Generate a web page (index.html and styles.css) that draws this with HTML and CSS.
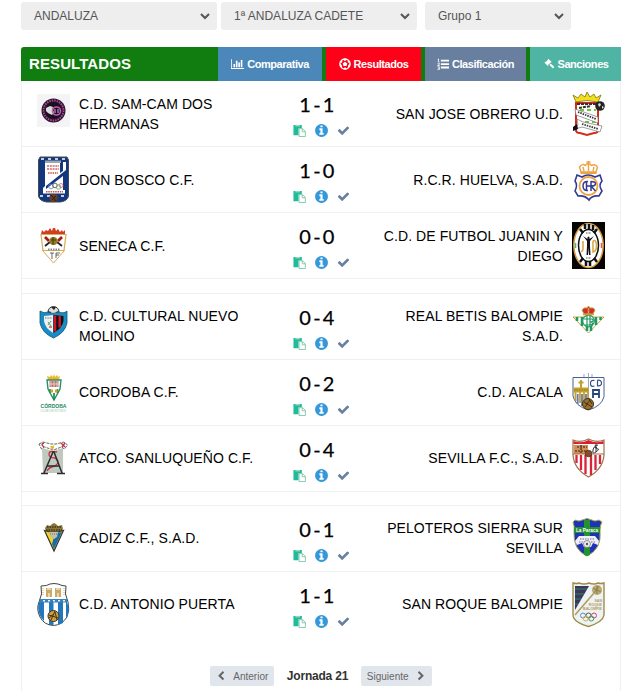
FILE: index.html
```
<!DOCTYPE html>
<html lang="es">
<head>
    <meta charset="UTF-8">
    <meta name="viewport" content="width=device-width, initial-scale=1.0">
    <title>Resultados - Jornada 21</title>
    <link rel="stylesheet" href="styles.css">
</head>
<body>
    <svg class="sprite" aria-hidden="true">
        <symbol id="i-chart" viewBox="0 0 2048 1792"><path d="M640 896v512h-256v-512h256zm384-512v1024h-256v-1024h256zm1024 1152v128h-2048v-1536h128v1408h1920zm-640-896v768h-256v-768h256zm384-384v1152h-256v-1152h256z"/></symbol>
        <symbol id="i-ball" viewBox="0 0 14 14"><circle cx="7" cy="7" r="6" fill="none" stroke="currentColor" stroke-width="1.600"/><path d="M7 4.300l2.700 2-1 3.100H5.300l-1-3.100zM3.600 1.600L7 3.500l3.400-1.900L7 .5zM1 6.500l2.200 1.700.5 3.500L1.500 10zM13 6.500l-2.200 1.700-.5 3.500 2.200-1.700zM1.500 4.800l2.100-2.900.3 2.800-1.800 1.400zM12.500 4.800l-2.100-2.900-.3 2.800 1.800 1.400zM4.500 12.900L7 10.800l2.500 2.100-2.500.6z"/></symbol>
        <symbol id="i-list" viewBox="0 0 14 14"><path d="M4.500 2h9.500v2.200H4.500zM4.500 6h9.500v2.200H4.500zM4.500 10h9.500v2.200H4.500zM1.300 1h1v3.300h1v.7H.5v-.7h.9V2H.6zM.6 5.700h2.500v2L1.500 8.600h1.700v.7H.5v-1l1.700-1.100v-.8H.6zM.6 10h2.600v3.600H.5v-.8h1.800v-.6H1v-.8h1.300v-.6H.6z"/></symbol>
        <symbol id="i-gavel" viewBox="0 0 14 14"><path d="M6.200.8l3.900 3.900-1 1-.5-.4-1 1 .9.900.8-.6 4 4-1.700 1.700-4-4 .5-.8-.9-.9-1.100 1.100.5.500-1 1L1.700 5.300l1-1 .5.400 2.700-2.700-.6-.3z"/></symbol>
        <symbol id="i-paste" viewBox="0 0 14 14"><path d="M.5 1.200h9v3.300H6v7.700H.5z"/><path fill="#9fd8b4" d="M2.500 1h5v1.600h-5z"/><path fill="#fff" stroke="#7dc9a4" d="M6.500 5h3.800l3 3v5.500H6.500z"/><path fill="none" stroke="#7dc9a4" d="M10 5v3.400h3.400"/></symbol>
        <symbol id="i-info" viewBox="0 0 1792 1792"><path d="M1152 1376v-160q0-14-9-23t-23-9h-96v-512q0-14-9-23t-23-9h-320q-14 0-23 9t-9 23v160q0 14 9 23t23 9h96v320h-96q-14 0-23 9t-9 23v160q0 14 9 23t23 9h448q14 0 23-9t9-23zm-128-896v-160q0-14-9-23t-23-9h-192q-14 0-23 9t-9 23v160q0 14 9 23t23 9h192q14 0 23-9t9-23zm640 416q0 209-103 385.500t-279.500 279.500-385.500 103-385.500-103-279.500-279.500-103-385.500 103-385.500 279.500-279.500 385.500-103 385.500 103 279.500 279.500 103 385.500z"/></symbol>
        <symbol id="i-check" viewBox="0 0 1792 1792"><path d="M1671 566q0 40-28 68l-724 724-136 136q-28 28-68 28t-68-28l-136-136-362-362q-28-28-28-68t28-68l136-136q28-28 68-28t68 28l294 295 656-657q28-28 68-28t68 28l136 136q28 28 28 68z"/></symbol>
        <symbol id="i-left" viewBox="0 0 1792 1792"><path d="M1427 301l-531 531 531 531q19 19 19 45t-19 45l-166 166q-19 19-45 19t-45-19l-742-742q-19-19-19-45t19-45l742-742q19-19 45-19t45 19l166 166q19 19 19 45t-19 45z"/></symbol>
        <symbol id="i-right" viewBox="0 0 1792 1792"><path d="M1363 877l-742 742q-19 19-45 19t-45-19l-166-166q-19-19-19-45t19-45l531-531-531-531q-19-19-19-45t19-45l166-166q19-19 45-19t45 19l742 742q19 19 19 45t-19 45z"/></symbol>
    </svg>

    <form class="filters">
        <select class="filter"><option>ANDALUZA</option></select>
        <select class="filter"><option>1ª ANDALUZA CADETE</option></select>
        <select class="filter filter-group"><option>Grupo 1</option></select>
    </form>

    <div class="card">
        <div class="card-header">
            <h1>RESULTADOS</h1>
            <a class="tab tab-comparativa"><svg class="wide"><use href="#i-chart"/></svg>Comparativa</a>
            <a class="tab tab-resultados"><svg><use href="#i-ball"/></svg>Resultados</a>
            <a class="tab tab-clasificacion"><svg><use href="#i-list"/></svg>Clasificación</a>
            <a class="tab tab-sanciones"><svg><use href="#i-gavel"/></svg>Sanciones</a>
        </div>

        <div class="match">
            <svg class="crest" viewBox="0 0 33 47">
                <path fill="#f4f4f6" d="M0 4h33v33H0z"/>
                <circle cx="16.500" cy="20.500" r="12" fill="#28152a"/>
                <circle cx="16.500" cy="20.500" r="10" fill="none" stroke="#b04a9a" stroke-width="1.800" stroke-dasharray="1.500 1"/>
                <circle cx="16.500" cy="20.500" r="8" fill="#17121c"/>
                <path fill="#ddd" d="M9 18l4-2 3 1-1 3 2 2-2 3-4-2-2-2z"/>
                <circle cx="19.500" cy="21" r="4" fill="none" stroke="#c35cc0" stroke-width="1.600"/>
                <path stroke="#e8a4df" d="M18 19v4M21 19v4"/>
            </svg>
            <div class="team">C.D. SAM-CAM DOS HERMANAS</div>
            <div class="result">
                <div class="score">1-1</div>
                <div class="actions"><svg class="paste"><use href="#i-paste"/></svg><svg class="info"><use href="#i-info"/></svg><svg class="check"><use href="#i-check"/></svg></div>
            </div>
            <div class="team away">SAN JOSE OBRERO U.D.</div>
            <svg class="crest" viewBox="0 0 33 47">
                <path fill="#fff" stroke="#d8291c" stroke-width="2" d="M4 13h22v27q0 3-4 3l-7 2-7-2q-4 0-4-3z"/>
                <path fill="#f2de1c" stroke="#7d7414" stroke-width=".8" d="M1 5l5 3 3-4 4 3 2-5 3 5 4-3 2 4 5-3-3 7q-11-3-22 0z"/>
                <path stroke="#333" stroke-width="2" stroke-dasharray="3 1" d="M5 14h19M7 18l12-2"/>
                <path stroke="#6bc832" stroke-width="2" stroke-dasharray="4 3" d="M8 20h16M6 32h18"/>
                <circle cx="28" cy="16" r="4.800" fill="#222"/>
                <path fill="#ddd" d="M26 14l2-1 1 2-2 2zM30 16l2 1-2 2z"/>
                <path fill="#fff" stroke="#777" stroke-width=".7" d="M3 19l23 8v6L4 25zM5 29l6 3 19 4-2 6-18-5-7 2 3-4z"/>
                <path stroke="#333" stroke-width="1.800" stroke-dasharray="1.500 1" d="M6 22l18 7M10 34l16 5"/>
                <path fill="#111" d="M1 37l4-3 1 5-5 2z"/>
            </svg>
        </div>
        <div class="match">
            <svg class="crest" viewBox="0 0 33 47">
                <path fill="#12377c" stroke="#434c55" d="M3 1h27l1.500 3v36q-1 5-8 6h-14q-7-1-8-6V4z"/>
                <path fill="#fff" d="M8 7h15v10l3-2V6h3v8L9 30v5H6V32l2-2zM9 33L26 20v14H9z"/>
                <path stroke="#fff" stroke-width="1.500" stroke-dasharray="3 4" d="M4 3h25M3 40h28"/>
                <path fill="#99a7b2" d="M8 4.500h16v2.500H8z"/>
                <path stroke="#dc8a87" stroke-width="2" stroke-dasharray="2 .8" d="M10 10h12M10 13h12"/>
                <path stroke="#c7503b" stroke-width="1.300" stroke-dasharray="1.500 .8" d="M11 17h10"/>
                <path fill="#fff" d="M6 34h22v3.500H6z"/>
                <path stroke="#c7503b" stroke-width="1.600" stroke-dasharray="1.500 .8" d="M9 35.700h17"/>
                <g fill="none" stroke-width=".8"><circle cx="14" cy="30.500" r="2.300" stroke="#658cd0"/><circle cx="18" cy="29.500" r="2.300" stroke="#444"/><circle cx="21.500" cy="31" r="2.300" stroke="#5cac68"/><circle cx="24" cy="29.500" r="2" stroke="#db6666"/></g>
                <circle cx="16.500" cy="42" r="4.200" fill="#653c24"/>
                <path stroke="#301b16" d="M14 39l5 6M19 40l-4 4"/>
            </svg>
            <div class="team">DON BOSCO C.F.</div>
            <div class="result">
                <div class="score">1-0</div>
                <div class="actions"><svg class="paste"><use href="#i-paste"/></svg><svg class="info"><use href="#i-info"/></svg><svg class="check"><use href="#i-check"/></svg></div>
            </div>
            <div class="team away">R.C.R. HUELVA, S.A.D.</div>
            <svg class="crest" viewBox="0 0 33 47">
                <g fill="none" stroke="#eda340" stroke-width="1.400"><path d="M9 16L7.500 11q3-4 6-1.500 2.500-4 6 0 4-2 6 1.500L24 16zM12 15l-1-4M16.500 15V8M21 15l1-4M16.500 5v3M14.500 6h4"/><path stroke-width="2" d="M8.500 17h16"/><circle cx="16.500" cy="30" r="9" stroke-width="1.800"/></g>
                <g fill="none" stroke="#343b92"><path stroke-width="1.600" d="M5 19l5 2q6-4 13 0l5-2 2 6q-4 4 0 10l-3 5q-7-1-10 4-4-5-11-4l-3-5q3-6 0-10z"/><path stroke-width="1.500" d="M16 25.500q-5-.5-5 4.500t5 4.500M14.500 25v10M14.500 30h5M19 25v10M19 25.500q4.500 0 4.500 2.300T19 30l4.500 5"/></g>
            </svg>
        </div>
        <div class="match">
            <svg class="crest" viewBox="0 0 33 47">
                <path fill="#d33d20" d="M4 12l1-4 2 2 2-2 2 1 2-3 2 3 1-3h2l1 3 2-2 2 3 2-2 1 2 2-2v4z"/>
                <path fill="#fff" stroke="#d6ac57" stroke-width="1.200" d="M4 12.500h25l-2 16H6z"/>
                <path fill="none" stroke="#d6ac57" d="M5.500 28.500h22L16.500 41z"/>
                <path stroke="#222" stroke-width="1.800" d="M8 24l5-4M25 24l-5-4"/>
                <path stroke="#a51c17" stroke-width="2.800" d="M8 15l4 4M25 15l-4 4"/>
                <circle cx="16.500" cy="19" r="4" fill="#937b20"/><path stroke="#433b17" d="M14 18h5M16 15v8"/>
                <path stroke="#888" stroke-width="1.800" stroke-dasharray="1.500 1" d="M11 27.500h12"/>
                <path fill="none" stroke="#555" stroke-width=".9" d="M13 31h4M15 31v6M19 36v-5h4M19 33h3"/>
            </svg>
            <div class="team">SENECA C.F.</div>
            <div class="result">
                <div class="score">0-0</div>
                <div class="actions"><svg class="paste"><use href="#i-paste"/></svg><svg class="info"><use href="#i-info"/></svg><svg class="check"><use href="#i-check"/></svg></div>
            </div>
            <div class="team away">C.D. DE FUTBOL JUANIN Y DIEGO</div>
            <svg class="crest" viewBox="0 0 33 47">
                <path fill="#050403" d="M0 0h33v47H0z"/>
                <ellipse cx="16.500" cy="23.500" rx="14.700" ry="22" fill="#fff" stroke="#d5993e" stroke-width="1.500"/>
                <ellipse cx="16.500" cy="23.500" rx="10" ry="16" fill="#fff" stroke="#111" stroke-width="1.500"/>
                <path stroke="#111" stroke-width="2.500" d="M13 2v5M17 2v5M21 3v5M14 39v5M18 39v5M8 7l3 4M25 7l-3 4M8 40l3-4M25 40l-3-4"/>
                <path stroke="#56b184" stroke-width="1.500" d="M3.500 21v5"/><path stroke="#d95b61" stroke-width="1.500" d="M29.500 21v5"/>
                <path fill="none" stroke="#d6aa49" stroke-width="1.600" d="M11 19v7q0 4-2 3M21 19v11q4-1 3.500-7t-3.500-4"/>
                <path fill="#111" d="M11 14l4.500 3q-.5-2.500 1-2.500t1 2.500l4.500-3-4 5v5l.5 9h-1.500l-.5-7-.5 7H14.500l.5-9v-5z"/>
                <path stroke="#555" stroke-width="1.200" stroke-dasharray="1 .5" d="M14 11h5M14 36h5"/>
            </svg>
        </div>

        <div class="separator"></div>

        <div class="match">
            <svg class="crest" viewBox="0 0 33 47">
                <circle cx="16.500" cy="9" r="5.500" fill="#ddd" stroke="#333"/><path fill="#222" d="M14 4h5l-2 3zM11 8l3 1-1 3-2-1zM22 8l-3 1 1 3z"/>
                <path fill="#188cc5" stroke="#17546f" stroke-width=".8" d="M3 8q4 3 8 1 5 3 10 0 6 2 9-1v12q-2 10-13.500 15Q5 30 3 20z"/>
                <path fill="#eee" d="M7 13l9-1v18q-8-5-9-12z"/>
                <path fill="#131016" d="M16.500 12l10 1v5q-1 7-10 12z"/>
                <path stroke="#cf1624" stroke-width="2.400" d="M18 12.500v16M22.700 12.500v12"/>
                <path stroke="#777" stroke-dasharray="1 .6" d="M8 15h7"/><path stroke="#54a56c" d="M11 19l3 4M14 18l-3 4"/><path stroke="#c45d4c" stroke-width="1.500" d="M12 24h3"/>
            </svg>
            <div class="team">C.D. CULTURAL NUEVO MOLINO</div>
            <div class="result">
                <div class="score">0-4</div>
                <div class="actions"><svg class="paste"><use href="#i-paste"/></svg><svg class="info"><use href="#i-info"/></svg><svg class="check"><use href="#i-check"/></svg></div>
            </div>
            <div class="team away">REAL BETIS BALOMPIE S.A.D.</div>
            <svg class="crest" viewBox="0 0 33 47">
                <path fill="#fff" stroke="#c9a34a" d="M1 14h31L16.500 30z"/>
                <path stroke="#1a9d60" stroke-width="2.500" d="M5 14v4M10 14v9M24 14v8M28.500 14v3M15 22v6M19 22v6"/>
                <circle cx="16.500" cy="18" r="5.800" fill="#fff" stroke="#23955e" stroke-width="1.200"/>
                <path fill="none" stroke="#23955e" stroke-width="1.200" d="M15 13v10M18 13v10M12 16h8q3 2-1 3 4 2-1 3h-5"/>
                <path fill="#d82930" stroke="#c4a23d" d="M12 11l-2-4q2-3 5-2l1.500-2L18 5q4-1 5 2l-2 4z"/>
                <path stroke="#c4a23d" stroke-width="1.600" d="M11 11.500h11M16.500 5v6"/>
            </svg>
        </div>
        <div class="match">
            <svg class="crest" viewBox="0 0 33 47">
                <path fill="#efb52a" d="M10 7l3 1 1-2 2 2 1-3 1 3 2-2 1 2 2-1-1 4H11z"/>
                <path fill="#fff" stroke="#299069" stroke-width="1.400" d="M10 11h14l-1 9-6 11-6-11z"/>
                <path fill="#bd7369" d="M12.500 12h9v6h-9z"/><path stroke="#eee" stroke-width=".7" d="M14 12v6M17 12v6M20 12v6M12 15h10"/>
                <path stroke="#178c5c" stroke-width="1.700" d="M13 20v4M17 24v7M20.500 20v4"/>
                <path stroke="#df9e27" stroke-width="3" stroke-dasharray="2.500 2" d="M13.500 22h7"/>
                <text class="crest-name" x="16.500" y="39" textLength="26" lengthAdjust="spacingAndGlyphs">CÓRDOBA</text>
                <text class="crest-sub" x="16.500" y="43" textLength="26" lengthAdjust="spacingAndGlyphs">CLUB DE FÚTBOL</text>
            </svg>
            <div class="team">CORDOBA C.F.</div>
            <div class="result">
                <div class="score">0-2</div>
                <div class="actions"><svg class="paste"><use href="#i-paste"/></svg><svg class="info"><use href="#i-info"/></svg><svg class="check"><use href="#i-check"/></svg></div>
            </div>
            <div class="team away">C.D. ALCALA</div>
            <svg class="crest" viewBox="0 0 33 47">
                <path fill="#fff" stroke="#486093" d="M1 8.500h31v19Q30 37 16.500 41 3 37 1 27z"/>
                <path stroke="#8791ad" stroke-width=".8" d="M12 5v3M16.500 4v36M20 5v3"/>
                <path stroke="#c0a02e" stroke-width="2" d="M9 11v9M6.500 13.500h5"/>
                <path fill="#c5a32b" d="M1.500 18.500h15v5h-15z"/>
                <path stroke="#c5a32b" stroke-width="1.800" d="M3.500 23v9M8 23v11M12 23v9M16 23v9"/><path stroke="#6678b8" stroke-width="1.800" d="M5.700 25v10M10 25v12M14 25v6"/>
                <path stroke="#8b7228" stroke-dasharray="1.500 1" d="M2 21h14"/>
                <circle cx="16" cy="35" r="5.500" fill="#9c722a" stroke="#3e3020"/><path fill="none" stroke="#3e3020" d="M12 33l8 5M13 38l5-7M17 30l3 5"/>
                <path fill="none" stroke="#365083" stroke-width="1.200" d="M22.500 11.500q-4-1-4 3t4 2.500M25.500 11.200v5.600q4 .5 4-2.800t-4-2.800"/><path fill="none" stroke="#244378" stroke-width="1.800" d="M21 29v-8h6v8M21 25h6"/>
            </svg>
        </div>
        <div class="match">
            <svg class="crest" viewBox="0 0 33 47">
                <path fill="#bfc9bd" d="M5 13l11 3 10-3v25H6z"/>
                <path fill="#fff" stroke="#555" stroke-width=".9" stroke-dasharray="3 1" d="M2 9l4-2 8 2h5l8-2 3.500 3-3 4-3-2-8 3-9-3-3 2z"/>
                <path fill="none" stroke="#c92d41" stroke-width="1.300" d="M7 8q-4 1 0 4M24 8l4 4M28 8l-3 4M20 17q-8-2-8 2t6 4q6 4 0 8-6 1-8 5"/>
                <path fill="#e0bb32" d="M13 11h3l1-1v3l-2 2z"/>
                <path fill="none" stroke="#292d32" stroke-width="1.500" d="M7 38l9-21h1L25 38M10 31h13M4 38.500h7M20 38.500h8"/>
            </svg>
            <div class="team">ATCO. SANLUQUEÑO C.F.</div>
            <div class="result">
                <div class="score">0-4</div>
                <div class="actions"><svg class="paste"><use href="#i-paste"/></svg><svg class="info"><use href="#i-info"/></svg><svg class="check"><use href="#i-check"/></svg></div>
            </div>
            <div class="team away">SEVILLA F.C., S.A.D.</div>
            <svg class="crest" viewBox="0 0 33 47">
                <path fill="#fff" stroke="#9f7045" stroke-width="1.200" d="M1 5q8 3 15.500-1Q24 8 32 5v15q-1 14-15.500 22Q2 34 1 20z"/>
                <path fill="#d91e36" d="M1.500 6q8 3 15-1 7 4 15 1v3h-30z"/>
                <path fill="#cf9358" d="M2 10h14v9H2z"/><path stroke="#713d2c" stroke-width="1.500" stroke-dasharray="2 1" d="M5 12h10M3 16h12M9 10v9"/>
                <path fill="none" stroke="#333" stroke-width="1" d="M26 10q-4 0-3 2t3 2-2 3-3-2 4-2M24 9v8"/>
                <path stroke="#da2439" stroke-width="2.300" d="M4.500 20v8M9 20v15M13.500 20v19M19 20v20M23.500 20v15M28 20v9"/>
                <path stroke="#9f7045" d="M1 19h31"/><circle cx="16.500" cy="18.500" r="3.300" fill="#845029" stroke="#45291c" stroke-width=".7"/>
            </svg>
        </div>

        <div class="separator short"></div>

        <div class="match">
            <svg class="crest" viewBox="0 0 33 47">
                <path fill="#8c7734" d="M9 17l-1-4 2-3 3 1 2-2 2-1 2 1 2 2 4-1 1 4-2 3z"/>
                <path stroke="#3d3929" stroke-width="1.400" stroke-dasharray="1.500 1" d="M10 12h15M9 15h16"/>
                <path fill="#f3d41c" stroke="#333" stroke-width="1.200" d="M7.500 15.500l5 1.500h8l6-1.500L17 36z"/>
                <path fill="#176bb1" d="M18 18l7-1-8 17-2-5z"/>
                <path fill="#c7c1a1" d="M12 17h9l-1 5-3 2-4-2z"/><path stroke="#777" stroke-dasharray="1 1" d="M13 19h7"/>
            </svg>
            <div class="team">CADIZ C.F., S.A.D.</div>
            <div class="result">
                <div class="score">0-1</div>
                <div class="actions"><svg class="paste"><use href="#i-paste"/></svg><svg class="info"><use href="#i-info"/></svg><svg class="check"><use href="#i-check"/></svg></div>
            </div>
            <div class="team away">PELOTEROS SIERRA SUR SEVILLA</div>
            <svg class="crest" viewBox="0 0 33 47">
                <path fill="#2032b5" stroke="#a3aa4c" d="M1 7l2-2 4 1 8-2.500L23 6l4-1 3 2q-2 3-2 9 2 18-13 25Q1 35 2 17 3 12 1 7z"/>
                <path fill="#239330" d="M12 5h6v35l-3 1-3-1z"/><path fill="#239330" d="M2 12h26v6H2z"/>
                <text class="crest-label" x="15" y="17" textLength="22" lengthAdjust="spacingAndGlyphs">La Paraca</text>
                <path fill="#eef" d="M7 21h16l4 5-1 4-5-2-2 4h-7l-2-4-5 2-2-4z"/>
                <path stroke="#555" stroke-width=".8" stroke-dasharray="1.500 1" d="M8 24h14M7 27h4M19 27h4"/>
                <circle cx="15" cy="29" r="3.500" fill="#eee" stroke="#777" stroke-width=".8"/><circle cx="15" cy="29" r="1.200" fill="#555"/>
            </svg>
        </div>
        <div class="match last">
            <svg class="crest" viewBox="0 0 33 47">
                <path fill="#fff" stroke="#444" d="M4 5q6 0 9-2 4-1 8 0 4 2 8 2-2 8 2 16 2 8-1 15-5 8-13.500 8.500Q7 44 3 36-1 28 2 21 6 13 4 5z"/>
                <path fill="#2377bd" d="M2 21h5v19q-8-8-5-19zM12 21h4.500v23H12zM21 21h5v21l-5 2zM30 21q4 10-1 16V21z"/>
                <path fill="#3883b9" d="M3 18h27v3.500H2z"/><path stroke="#eee" stroke-width="1.400" stroke-dasharray="2 3" d="M6 19.700h22"/>
                <path fill="#cbab64" d="M9 7h6v9H9zM18 7h6v9h-6z"/><path stroke="#fff" d="M11 6v3M13 6v3M20 6v3M22 6v3M12 12v4M21 12v4"/>
                <path stroke="#d5be83" stroke-width="1.300" stroke-dasharray="1 1" d="M6 7v8M27 7v8"/>
                <circle cx="16.500" cy="35" r="5.500" fill="#d1a136" stroke="#3d3423"/><path fill="none" stroke="#3d3423" d="M12 34l9 3M14 39l4-9M18 31l2 8M12 37l5-4"/>
            </svg>
            <div class="team">C.D. ANTONIO PUERTA</div>
            <div class="result">
                <div class="score">1-1</div>
                <div class="actions"><svg class="paste"><use href="#i-paste"/></svg><svg class="info"><use href="#i-info"/></svg><svg class="check"><use href="#i-check"/></svg></div>
            </div>
            <div class="team away">SAN ROQUE BALOMPIE</div>
            <svg class="crest" viewBox="0 0 33 47">
                <path fill="#edf2f4" stroke="#a18c46" stroke-width="1.400" d="M1 2q4 1 6 0 5 2 10 0 5 2 9 0 3 1 6 0v32q-1 7-15.500 11.500Q1 41 1 34z"/>
                <path fill="#41345f" d="M3 5h14L3 29z"/><path stroke="#28735e" stroke-width="1.400" d="M3 8h12M3 13h9M3 18h6M3 23h3"/>
                <path stroke="#b09b58" stroke-width="1.500" d="M3 34L22 12"/>
                <circle cx="25" cy="9" r="5" fill="#b8aa70"/><path fill="none" stroke="#847644" stroke-width=".8" d="M21 7l8 4M22 12l5-7M25 5v8"/>
                <text class="crest-lines" x="30" y="20.500">SAN</text>
                <text class="crest-lines" x="30" y="24.500">ROQUE</text>
                <text class="crest-lines" x="30" y="28.500">BALOMPIE</text>
                <g fill="none" stroke-width="1"><circle cx="11" cy="34.500" r="2.500" stroke="#568fbd"/><circle cx="16.500" cy="34.500" r="2.500" stroke="#555"/><circle cx="22" cy="34.500" r="2.500" stroke="#ce4c58"/><circle cx="13.800" cy="37.500" r="2.500" stroke="#d9b440"/><circle cx="19.300" cy="37.500" r="2.500" stroke="#519a60"/></g>
            </svg>
        </div>

        <div class="pager">
            <a class="pager-button"><svg><use href="#i-left"/></svg>Anterior</a>
            <span class="pager-title">Jornada 21</span>
            <a class="pager-button">Siguiente<svg><use href="#i-right"/></svg></a>
        </div>
    </div>
</body>
</html>
```
FILE: styles.css
```
* {
    box-sizing: border-box;
}

body {
    margin: 0;
    padding: 2px 6px 0 21px;
    height: 691px;
    overflow: hidden;
    background-color: #fff;
    font-family: Arial, "Liberation Sans", sans-serif;
    color: #000;
}

svg {
    display: block;
    fill: currentColor;
    flex: none;
}

.sprite {
    display: none;
}

.filters {
    display: flex;
    gap: 4px;
    margin-bottom: 17px;
}

.filter {
    width: 196px;
    height: 28px;
    padding: 0 3px 0 9px;
    border: none;
    border-right: 4px solid #eee;
    border-radius: 3px;
    background-color: #eee;
    color: #555;
    font-family: inherit;
    font-size: 12px;
}

.filter-group {
    width: 146px;
    margin-left: 4px;
}

.card {
    width: 600px;
    height: 660px;
    border: 1px solid #eef0f2;
    border-top: none;
    border-radius: 3px 3px 0 0;
}

.card-header {
    display: flex;
    gap: 4px;
    height: 34px;
    margin: 0 -1px;
    background-color: #117d11;
    border-radius: 3px 0 0 0;
    overflow: hidden;
    color: #fff;
}

.card-header h1 {
    flex: 1;
    margin: 0 -4px 0 0;
    padding-left: 8px;
    font-size: 15px;
    line-height: 34px;
    letter-spacing: 0.1px;
}

.tab {
    display: flex;
    align-items: center;
    justify-content: center;
    gap: 3px;
    font-size: 11px;
    font-weight: bold;
    letter-spacing: -0.45px;
}

.tab svg {
    width: 12px;
    height: 12px;
}

.tab svg.wide {
    width: 13px;
}

.tab-comparativa {
    width: 104px;
    background-color: #4b88b9;
}

.tab-resultados {
    width: 95px;
    background-color: #ff0019;
}

.tab-clasificacion {
    width: 101px;
    background-color: #687f9f;
}

.tab-sanciones {
    width: 91px;
    background-color: #4fb4a3;
}

.match {
    display: flex;
    align-items: center;
    height: 66px;
    padding: 0 15px;
    border-bottom: 1px solid #eef0f2;
}

.match.last {
    border-bottom-color: transparent;
}

.separator {
    height: 15px;
    border-bottom: 1px solid #eef0f2;
}

.separator.short {
    height: 14px;
}

.crest {
    width: 33px;
    height: 47px;
}

.crest-name {
    fill: #238764;
    font-size: 5.5px;
    font-weight: bold;
    text-anchor: middle;
}

.crest-sub {
    fill: #9bc7b4;
    font-size: 3px;
    text-anchor: middle;
}

.crest-label {
    fill: #fff;
    font-size: 5px;
    font-weight: bold;
    text-anchor: middle;
}

.crest-lines {
    fill: #b39c62;
    font-size: 3.6px;
    font-weight: bold;
    text-anchor: end;
}

.team {
    width: 180px;
    margin-left: 9px;
    font-size: 14px;
    line-height: 20px;
    letter-spacing: 0.08px;
}

.team.away {
    width: 188px;
    margin: 0 9px 0 0;
    text-align: right;
}

.separator ~ .match .team {
    margin-bottom: 2px;
}

.result {
    flex: 1;
}

.score {
    padding: 2px 0 0 2px;
    font-family: Lato, sans-serif;
    font-size: 20px;
    line-height: 24px;
    letter-spacing: 2.3px;
    text-align: center;
    -webkit-text-stroke: 0.25px #000;
}

.actions {
    display: flex;
    align-items: center;
    justify-content: center;
    gap: 8px;
    margin-top: 7px;
    padding-left: 9px;
}

.actions svg {
    width: 13px;
    height: 13px;
}

.actions .info {
    width: 15px;
    height: 15px;
}

.paste {
    color: #1fbc9c;
}

.info {
    color: #3598db;
}

.check {
    color: #67809f;
}

.pager {
    display: flex;
    align-items: center;
    justify-content: center;
    gap: 12.5px;
    margin-top: 28px;
}

.pager-button {
    display: flex;
    align-items: center;
    justify-content: center;
    gap: 7px;
    width: 64px;
    height: 20px;
    border-radius: 2px;
    background-color: #e1e5ec;
    color: #666;
    font-size: 10px;
}

.pager-button:last-child {
    width: 71px;
}

.pager-button svg {
    width: 10px;
    height: 10px;
}

.pager-title {
    font-size: 12px;
    font-weight: bold;
    color: #333;
    letter-spacing: -0.2px;
}
```
